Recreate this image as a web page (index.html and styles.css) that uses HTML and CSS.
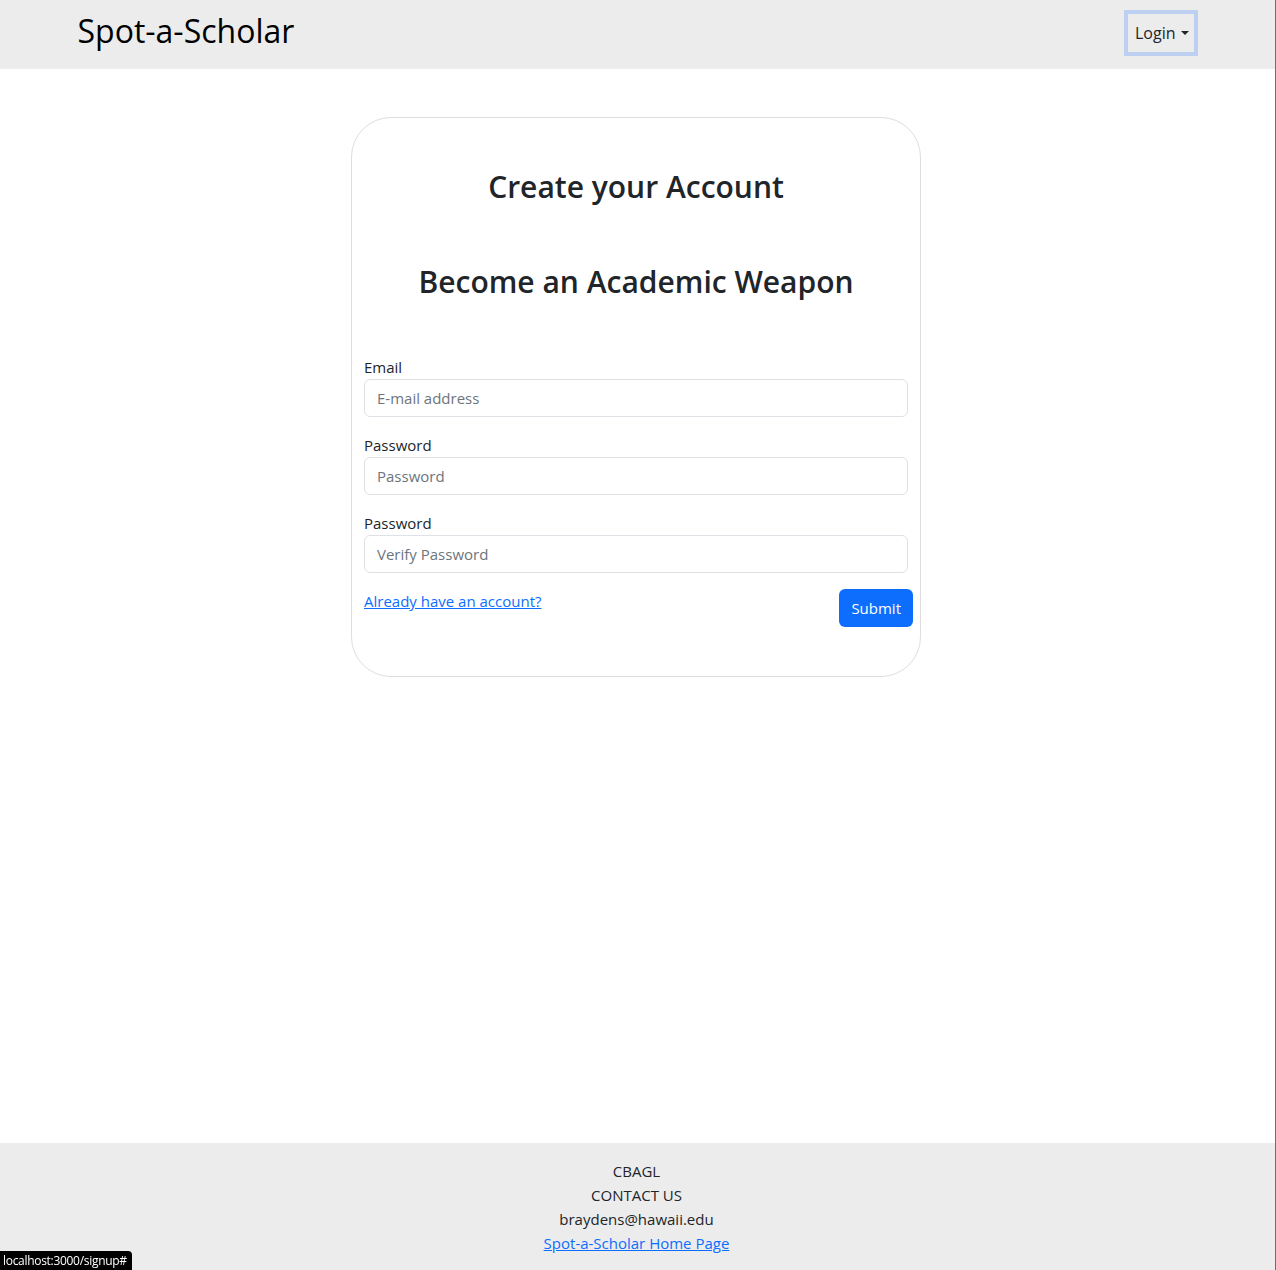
FILE: index.html
```html
<!DOCTYPE html>
<html lang="en">
<head>
<meta charset="utf-8">
<title>Spot-a-Scholar</title>
<link rel="stylesheet" href="styles.css">
</head>
<body>
<div class="page">
  <nav class="navbar">
    <div class="container nav-inner">
      <a class="brand" href="#">Spot-a-Scholar</a>
      <button class="login-btn" type="button">Login<span class="caret"></span></button>
    </div>
  </nav>

  <main class="main">
    <div class="card">
      <h2 class="title first">Create your Account</h2>
      <h2 class="title second">Become an Academic Weapon</h2>
      <form class="form">
        <div class="field">
          <label class="label" for="email">Email</label>
          <input class="input" id="email" type="text" placeholder="E-mail address">
        </div>
        <div class="field">
          <label class="label" for="pw">Password</label>
          <input class="input" id="pw" type="password" placeholder="Password">
        </div>
        <div class="field">
          <label class="label" for="pw2">Password</label>
          <input class="input" id="pw2" type="password" placeholder="Verify Password">
        </div>
        <div class="actions">
          <a class="link" href="#">Already have an account?</a>
          <button class="submit" type="button">Submit</button>
        </div>
      </form>
    </div>
  </main>

  <footer class="footer">
    <div>CBAGL</div>
    <div>CONTACT US</div>
    <div>braydens@hawaii.edu</div>
    <a class="link" href="#">Spot-a-Scholar Home Page</a>
  </footer>
</div>
<div class="status">localhost:3000/signup#</div>
</body>
</html>
```

FILE: styles.css
```css
* { box-sizing: border-box; }
html, body { margin: 0; padding: 0; }
body {
  font-family: "Open Sans", "Noto Sans", sans-serif;
  font-size: 15px;
  line-height: 24px;
  color: #212529;
  background: #fff;
}
.page {
  width: 1276px;
  min-height: 1270px;
  border-right: 1px solid #6f6f6f;
  display: flex;
  flex-direction: column;
}
.navbar {
  background: #ececec;
  height: 69px;
}
.container {
  width: 1140px;
  margin: 0 auto;
  padding: 0 12px;
}
.nav-inner {
  height: 100%;
  display: flex;
  align-items: flex-start;
  justify-content: space-between;
}
.brand {
  color: #000;
  text-decoration: none;
  font-size: 32px;
  line-height: 40px;
  margin-top: 11px;
  margin-left: -2px;
}
.login-btn {
  margin-top: 14px;
  margin-right: 2px;
  height: 38px;
  padding: 0 5px 0 7px;
  background: #ececec;
  border: none;
  font-family: inherit;
  font-size: 16px;
  color: #212529;
  box-shadow: 0 0 0 4px #bdd0f1;
  display: flex;
  align-items: center;
}
.caret {
  display: inline-block;
  margin-left: 5px;
  width: 0;
  height: 0;
  border-left: 4px solid transparent;
  border-right: 4px solid transparent;
  border-top: 4px solid #212529;
}
.main {
  padding-top: 48px;
  display: flex;
  justify-content: center;
}
.card {
  width: 570px;
  height: 560px;
  margin-left: -3px;
  border: 1px solid #dedede;
  border-radius: 40px;
  padding: 0 12px;
}
.title {
  margin: 0;
  font-weight: 600;
  font-size: 30px;
  line-height: 38px;
  text-align: center;
}
.title.first { margin-top: 50px; }
.title.second { margin-top: 57px; }
.form { margin-top: 54px; }
.field { margin-bottom: 16px; }
.label { display: block; line-height: 24px; }
.input {
  display: block;
  width: 100%;
  height: 38px;
  padding: 6px 12px;
  border: 1px solid #dee2e6;
  border-radius: 6px;
  font-family: inherit;
  font-size: 15px;
  color: #212529;
}
.input::placeholder { color: #6c757d; }
.actions {
  display: flex;
  justify-content: space-between;
  align-items: flex-start;
  margin-right: -5px;
}
.link { color: #0d6efd; text-decoration: underline; }
.submit {
  height: 38px;
  padding: 0 12px;
  background: #0d6efd;
  color: #fff;
  border: none;
  border-radius: 6px;
  font-family: inherit;
  font-size: 15px;
}
.footer {
  margin-top: auto;
  background: #ececec;
  height: 127px;
  padding-top: 16px;
  padding-right: 2px;
  text-align: center;
  display: flex;
  flex-direction: column;
  align-items: center;
}
.status {
  position: fixed;
  left: 0;
  bottom: 0;
  background: #000;
  color: #fff;
  font-size: 12px;
  line-height: 19px;
  padding: 0 5px 0 3px;
  border-top-right-radius: 4px;
  letter-spacing: -0.3px;
}
```
